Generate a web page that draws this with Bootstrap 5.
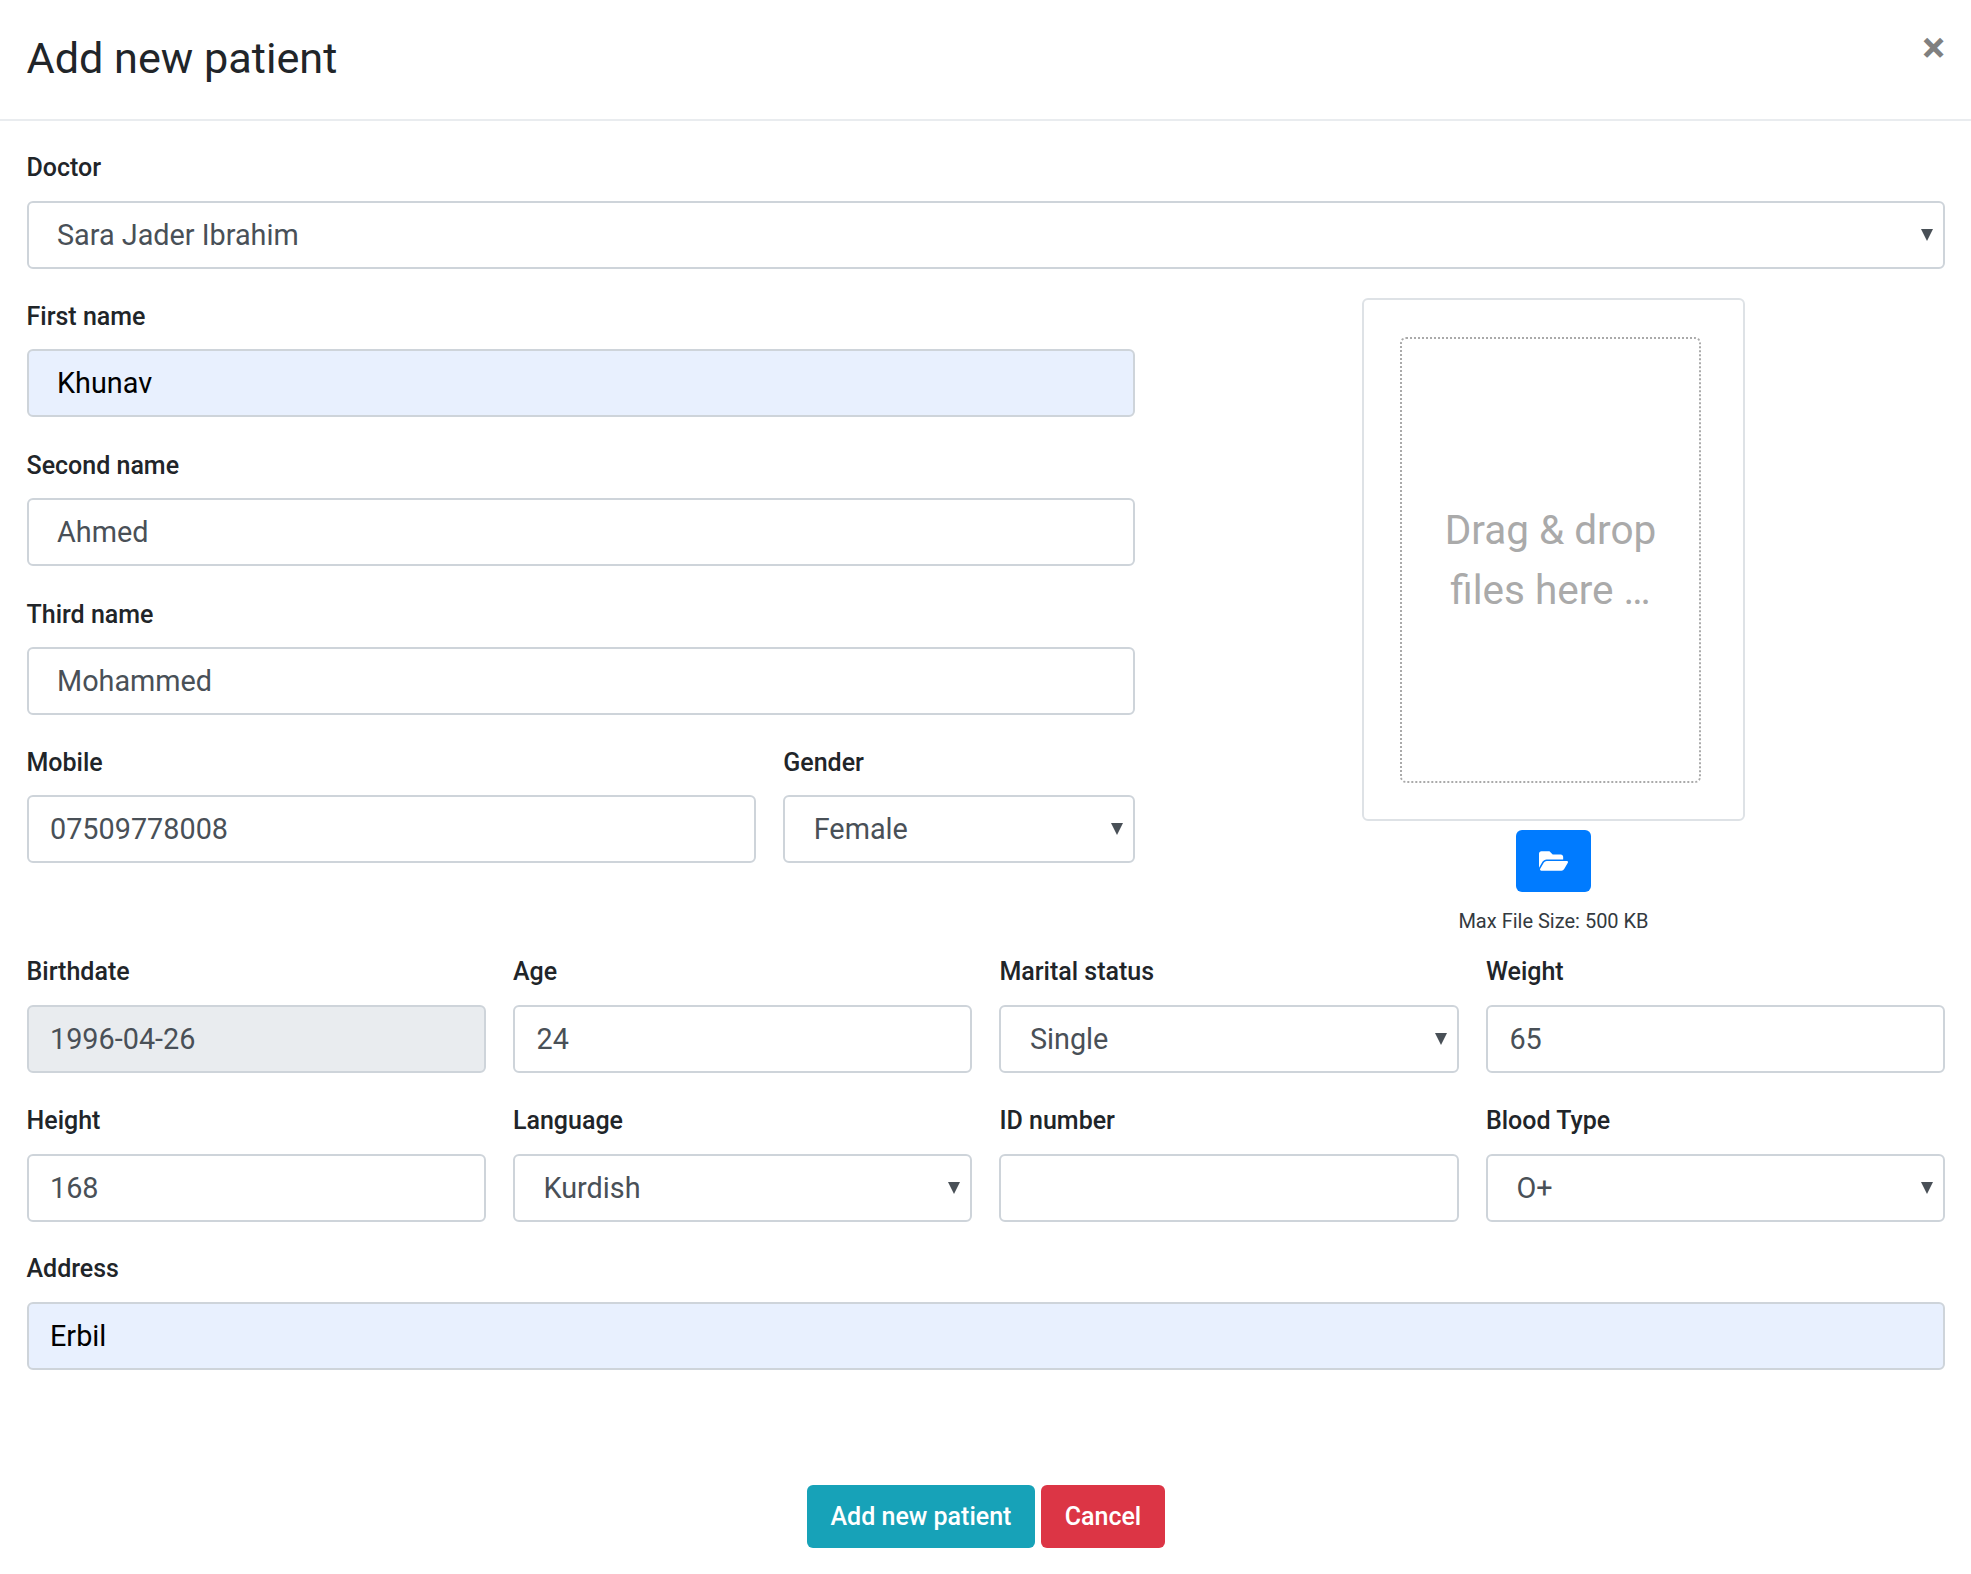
<!DOCTYPE html>
<html lang="en">
<head>
<meta charset="utf-8">
<title>Add new patient</title>
<link rel="stylesheet" href="https://cdn.jsdelivr.net/npm/bootstrap@5.3.0/dist/css/bootstrap.min.css">
<style>
body { font-family: Roboto, "Liberation Sans", sans-serif; color: #212529; background: #fff; }
.pat-head { height: 121px; padding: 0 26.5px; border-bottom: 2px solid #e9ecef; border-radius: 0; align-items: flex-start; }
.pat-head .modal-title { font-size: 43.2px; line-height: 1.5; font-weight: 400; margin-top: 27px; }
.pat-close { background: none; border: 0; padding: 0; color: #808080; font-size: 43px; font-weight: 700; line-height: 1; margin-top: 26px; margin-right: -0.5px; font-family: Roboto, sans-serif; }
.pat-body { padding: 29px 25.6px 0 26.5px; }
.pat-body .row { --bs-gutter-x: 27px; }
.pat-field { margin-bottom: 29.5px; }
.pat-field.pat-top { margin-bottom: 29px; }
.pat-field.pat-first { margin-bottom: 30px; }
.pat-field .form-label { font-size: 25px; line-height: 36px; font-weight: 500; margin-bottom: 15px; display: block; color: #212529; }
.col-7 .pat-field .form-label { padding-top: 1px; margin-bottom: 14px; }
.pat-field .form-control, .pat-field .form-select { height: 68px; font-size: 28.8px; line-height: 1.5; color: #495057; border: 2px solid #ced4da; border-radius: 6px; padding: 0 21.5px; box-shadow: none; }
.pat-field .form-select { padding-left: 28.5px; padding-top: 2px; background-image: url("data:image/svg+xml,%3Csvg xmlns='http://www.w3.org/2000/svg' viewBox='0 0 12 12'%3E%3Cpath fill='%23495057' d='M0 0h12L6 12z'/%3E%3C/svg%3E"); background-size: 12px 12px; background-position: right 10px center; }
.pat-field .pat-wide { padding-left: 28.5px; }
.pat-field .pat-auto { background: #e8f0fe; color: #000; }
.pat-field .form-control:disabled { background: #e9ecef; opacity: 1; }
.pat-photo { width: 383px; height: 522.5px; border: 2px solid #dee2e6; border-radius: 6px; padding: 37px 42px 36px 36px; }
.pat-drop { height: 100%; border: 2px dotted #aaa; border-radius: 6px; color: #aaa; font-size: 40.5px; line-height: 60px; text-align: center; }
.pat-browse { width: 75px; height: 62px; background: #007bff; border: 0; border-radius: 6px; margin-top: 9.5px; padding: 0; }
.pat-browse svg { width: 29px; height: 26px; fill: #fff; display: block; margin: 0 auto; }
.pat-max { font-size: 20px; line-height: 27px; margin: 16px 0 19px; color: #343a40; }
.pat-foot { padding: 115px 0 26px; gap: 6px; }
.pat-foot .btn { height: 63px; font-size: 25px; font-weight: 500; border: 0; border-radius: 6px; padding: 0; }
.pat-save { width: 228px; background: #17a2b8; color: #fff; }
.pat-cancel { width: 124px; background: #dc3545; color: #fff; }
</style>
</head>
<body>
<div class="modal-header pat-head d-flex justify-content-between">
  <h4 class="modal-title">Add new patient</h4>
  <button type="button" class="pat-close" aria-label="Close">×</button>
</div>
<form class="pat-body">
  <div class="pat-field pat-top">
    <label class="form-label">Doctor</label>
    <select class="form-select"><option>Sara Jader Ibrahim</option></select>
  </div>
  <div class="row">
    <div class="col-7">
      <div class="pat-field pat-first">
        <label class="form-label">First name</label>
        <input class="form-control pat-wide pat-auto" value="Khunav">
      </div>
      <div class="pat-field">
        <label class="form-label">Second name</label>
        <input class="form-control pat-wide" value="Ahmed">
      </div>
      <div class="pat-field">
        <label class="form-label">Third name</label>
        <input class="form-control pat-wide" value="Mohammed">
      </div>
      <div class="row">
        <div class="col-8 pat-field">
          <label class="form-label">Mobile</label>
          <input class="form-control" value="07509778008">
        </div>
        <div class="col-4 pat-field">
          <label class="form-label">Gender</label>
          <select class="form-select"><option>Female</option></select>
        </div>
      </div>
    </div>
    <div class="col-5 d-flex flex-column align-items-center">
      <div class="pat-photo">
        <div class="pat-drop d-flex align-items-center justify-content-center"><div class="pat-droptext">Drag &amp; drop<br>files here …</div></div>
      </div>
      <button type="button" class="pat-browse d-flex align-items-center justify-content-center" aria-label="Browse">
        <svg viewBox="0 0 576 512"><path d="M572.694 292.093L500.27 416.248A63.997 63.997 0 0 1 444.989 448H45.025c-18.523 0-30.064-20.093-20.731-36.093l72.424-124.155A64 64 0 0 1 152 256h399.964c18.523 0 30.064 20.093 20.73 36.093zM152 224h328v-48c0-26.51-21.49-48-48-48H272l-64-64H48C21.49 64 0 85.49 0 112v278.046l69.077-118.418C86.214 242.25 117.989 224 152 224z"/></svg>
      </button>
      <p class="pat-max">Max File Size: 500 KB</p>
    </div>
  </div>
  <div class="row">
    <div class="col-3 pat-field">
      <label class="form-label">Birthdate</label>
      <input class="form-control" value="1996-04-26" disabled>
    </div>
    <div class="col-3 pat-field">
      <label class="form-label">Age</label>
      <input class="form-control" value="24">
    </div>
    <div class="col-3 pat-field">
      <label class="form-label">Marital status</label>
      <select class="form-select"><option>Single</option></select>
    </div>
    <div class="col-3 pat-field">
      <label class="form-label">Weight</label>
      <input class="form-control" value="65">
    </div>
    <div class="col-3 pat-field">
      <label class="form-label">Height</label>
      <input class="form-control" value="168">
    </div>
    <div class="col-3 pat-field">
      <label class="form-label">Language</label>
      <select class="form-select"><option>Kurdish</option></select>
    </div>
    <div class="col-3 pat-field">
      <label class="form-label">ID number</label>
      <input class="form-control" value="">
    </div>
    <div class="col-3 pat-field">
      <label class="form-label">Blood Type</label>
      <select class="form-select"><option>O+</option></select>
    </div>
  </div>
  <div class="pat-field mb-0">
    <label class="form-label">Address</label>
    <input class="form-control pat-auto" value="Erbil">
  </div>
  <div class="pat-foot d-flex justify-content-center">
    <button type="button" class="btn pat-save">Add new patient</button>
    <button type="button" class="btn pat-cancel">Cancel</button>
  </div>
</form>
<script src="https://cdn.jsdelivr.net/npm/bootstrap@5.3.0/dist/js/bootstrap.bundle.min.js"></script>
</body>
</html>
